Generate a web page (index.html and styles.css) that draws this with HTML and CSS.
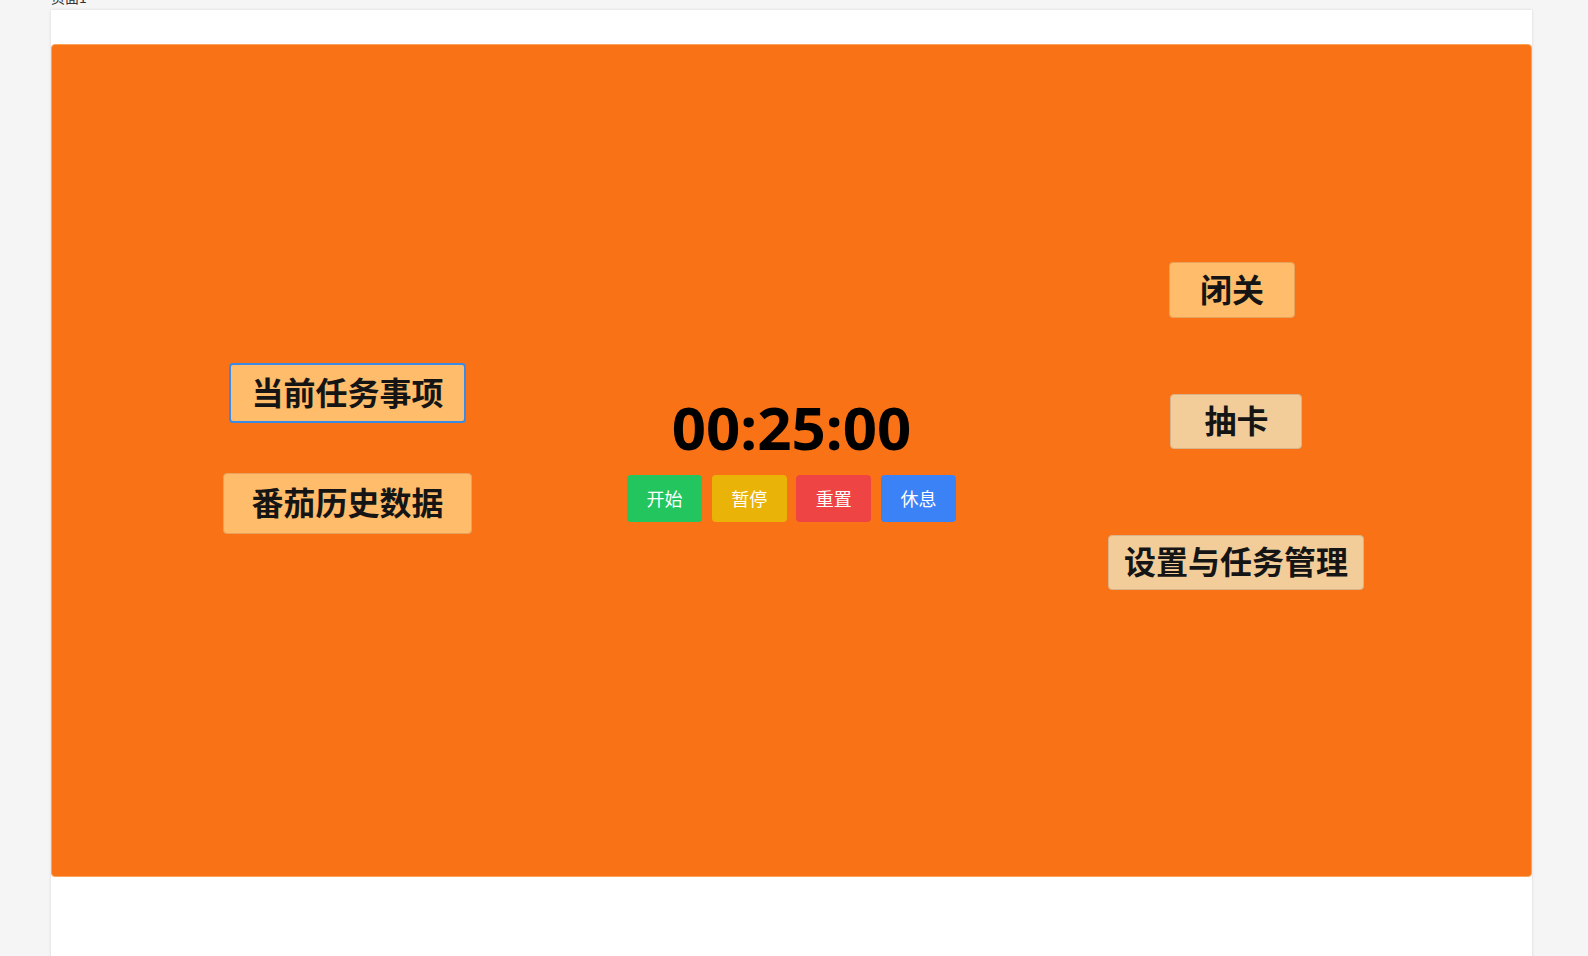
FILE: index.html
```html
<!DOCTYPE html>
<html lang="zh-CN">
<head>
<meta charset="utf-8">
<title>番茄钟</title>
<link rel="stylesheet" href="styles.css">
</head>
<body>
<div class="page-label">页面1</div>
<div class="panel">
  <div class="stage">
    <div class="col col-left">
      <button class="big-btn btn-task">当前任务事项</button>
      <button class="big-btn btn-history">番茄历史数据</button>
    </div>
    <div class="center">
      <div class="timer">00:25:00</div>
      <div class="controls">
        <button class="ctl ctl-start">开始</button>
        <button class="ctl ctl-pause">暂停</button>
        <button class="ctl ctl-reset">重置</button>
        <button class="ctl ctl-rest">休息</button>
      </div>
    </div>
    <div class="col col-right">
      <button class="big-btn btn-retreat">闭关</button>
      <button class="big-btn btn-draw">抽卡</button>
      <button class="big-btn btn-settings">设置与任务管理</button>
    </div>
  </div>
</div>
</body>
</html>
```

FILE: styles.css
```css
html, body {
  margin: 0;
  padding: 0;
}
body {
  background: #f5f5f5;
  font-family: "Noto Sans", "Noto Sans CJK SC", sans-serif;
  color: #111;
  overflow: hidden;
}
.page-label {
  height: 10px;
  margin-left: 51px;
  font-size: 14px;
  line-height: 18px;
  margin-top: -12px;
  margin-bottom: 12px;
  color: #333;
  font-family: "Noto Sans CJK SC", sans-serif;
}
.panel {
  margin-left: 51px;
  width: 1481px;
  height: 1000px;
  background: #fff;
  box-shadow: 0 0 3px rgba(0, 0, 0, 0.12);
  padding-top: 34px;
  box-sizing: border-box;
}
.stage {
  height: 833px;
  box-sizing: border-box;
  background: #f97316;
  border: 1px solid #fca35a;
  border-radius: 4px;
  padding: 0 15px;
  display: grid;
  grid-template-columns: 1fr auto 1fr;
  align-items: center;
}
.col {
  display: flex;
  flex-direction: column;
  align-items: center;
}
.col-left {
  padding-bottom: 24px;
}
.col-left .btn-history {
  margin-top: 50px;
}
.col-right {
  padding-bottom: 69px;
}
.col-right .btn-draw {
  margin-top: 76px;
}
.col-right .btn-settings {
  margin-top: 86px;
}
.big-btn {
  font-family: "Noto Sans CJK SC", sans-serif;
  font-weight: 700;
  font-size: 32px;
  line-height: 42px;
  color: #151515;
  border: 1px solid #e9a25c;
  border-radius: 4px;
  background: #ffbc6a;
  margin: 0;
  cursor: pointer;
}
.btn-task {
  border: 2px solid #3b8ae6;
  padding: 5px 20px 9px 21px;
}
.btn-history {
  padding: 6px 27px 11px 28px;
}
.btn-retreat {
  padding: 4px 30px 8px;
  position: relative;
  left: -4px;
}
.btn-draw {
  background: #f2cd99;
  border-color: #d9b48a;
  padding: 3px 32px 8px 33px;
}
.btn-settings {
  background: #f2cd99;
  border-color: #d9b48a;
  padding: 3px 15px 8px 15px;
}
.center {
  display: flex;
  flex-direction: column;
  align-items: center;
  padding-bottom: 8px;
}
.timer {
  font-family: "Noto Sans", "Noto Sans CJK SC", sans-serif;
  font-weight: 700;
  font-size: 60px;
  line-height: 72px;
  color: #000;
}
.controls {
  display: flex;
  gap: 9.67px;
  margin-top: 12px;
}
.ctl {
  width: 75px;
  padding: 10px 0;
  font-family: "Noto Sans CJK SC", sans-serif;
  font-size: 18px;
  line-height: 27px;
  color: #fff;
  border: none;
  border-radius: 4px;
  margin: 0;
  cursor: pointer;
}
.ctl-start { background: #22c55e; }
.ctl-pause { background: #eab308; }
.ctl-reset { background: #ef4444; }
.ctl-rest { background: #3b82f6; }
```
